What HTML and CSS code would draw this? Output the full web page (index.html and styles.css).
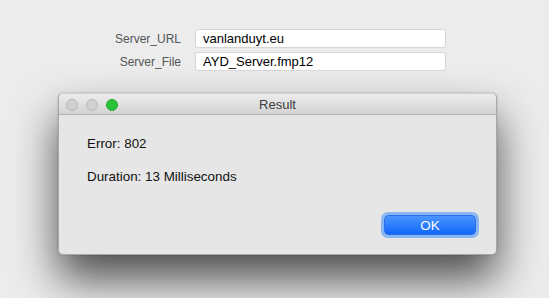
FILE: index.html
```html
<!DOCTYPE html>
<html lang="en">
<head>
  <meta charset="UTF-8" />
  <title>Result</title>
  <link rel="stylesheet" href="styles.css">
</head>
<body>

  <div class="form">
    <div class="row">
      <label class="label">Server_URL</label>
      <div class="field">vanlanduyt.eu</div>
    </div>
    <div class="row">
      <label class="label">Server_File</label>
      <div class="field">AYD_Server.fmp12</div>
    </div>
  </div>

  <div class="dialog">
    <div class="titlebar">
      <div class="lights">
        <span class="light"></span>
        <span class="light"></span>
        <span class="light green"></span>
      </div>
      <div class="title">Result</div>
    </div>
    <div class="content">
      <p class="msg">Error: 802</p>
      <p class="msg">Duration: 13 Milliseconds</p>
      <div class="actions">
        <button class="ok">OK</button>
      </div>
    </div>
  </div>

</body>
</html>
```

FILE: styles.css
```css
* {
  box-sizing: border-box;
}

body {
  font-family: 'Liberation Sans', Arial, sans-serif;
  font-size: 13px;
  background: #ececec;
  color: #111;
  margin: 0;
  width: 549px;
  height: 298px;
  overflow: hidden;
}

.form {
  padding-top: 29px;
}

.row {
  display: flex;
  align-items: center;
  margin-bottom: 4px;
}

.label {
  width: 182px;
  text-align: right;
  color: #555;
  font-size: 12px;
  padding-right: 1px;
}

.field {
  margin-left: 13px;
  width: 251px;
  height: 19px;
  line-height: 18px;
  padding-left: 7px;
  background: #fff;
  border: 1px solid #d6d6d6;
  border-radius: 3px;
  color: #000;
  font-size: 13px;
}

.dialog {
  margin: 22px 0 0 58px;
  width: 439px;
  height: 162px;
  background: #e6e6e6;
  border: 1px solid #a8a8a8;
  border-top-color: #cfcfcf;
  border-radius: 5px;
  box-shadow: 0 24px 44px rgba(0, 0, 0, 0.68), 0 0 2px rgba(0, 0, 0, 0.25);
  overflow: hidden;
}

.titlebar {
  position: relative;
  height: 21px;
  background: linear-gradient(#ececec, #d3d3d3);
  border-bottom: 1px solid #b1b1b1;
  display: flex;
  align-items: center;
  justify-content: center;
}

.lights {
  position: absolute;
  left: 7px;
  top: 5px;
  display: flex;
  gap: 8px;
}

.light {
  width: 12px;
  height: 12px;
  border-radius: 50%;
  background: #d0d0d0;
  border: 1px solid #b8b8b8;
}

.light.green {
  background: #2ac13b;
  border-color: #24a832;
}

.title {
  font-size: 13px;
  color: #3c3c3c;
}

.content {
  padding: 21px 17px 0 28px;
  font-size: 13.4px;
}

.msg {
  margin: 0 0 17px;
  line-height: 16px;
}

.actions {
  display: flex;
  justify-content: flex-end;
  padding-top: 13px;
}

.ok {
  width: 92px;
  height: 20px;
  font-family: 'Liberation Sans', Arial, sans-serif;
  font-size: 13.4px;
  color: #fff;
  border: 1px solid #2a6fe6;
  border-radius: 4px;
  background: linear-gradient(#4b95fd, #1268fb);
  box-shadow: 0 0 0 3px #88b5f3;
  margin-right: 3px;
  padding: 0;
}
```
